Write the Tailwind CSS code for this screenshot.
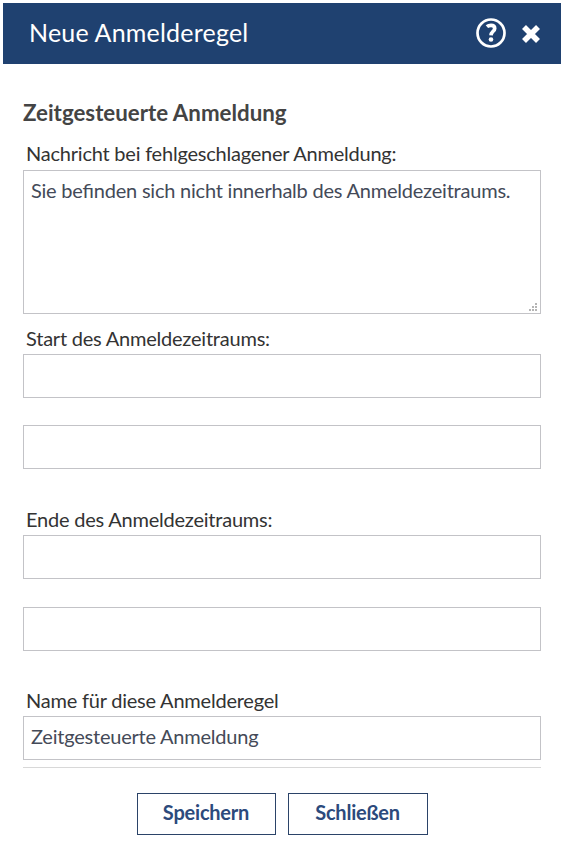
<!DOCTYPE html>
<html lang="de">
<head>
  <meta charset="UTF-8" />
  <meta name="viewport" content="width=device-width, initial-scale=1.0"/>
  <title>Neue Anmelderegel</title>
  <script src="https://cdn.jsdelivr.net/npm/@tailwindcss/browser@4"></script>
</head>
<body class="bg-white font-[Lato,sans-serif] text-[20px] leading-6 tracking-[-0.22px] [font-feature-settings:'liga'_1] text-[#333] overflow-hidden">

  <div class="w-[558px] ml-[3px] pt-[3px]">

    <header class="flex items-center h-[61px] pl-[26px] pr-[21px] pb-px bg-[#1f4170] text-white">
      <h1 class="text-[25px] leading-8 tracking-[0.2px] pb-[2px]">Neue Anmelderegel</h1>
      <button type="button" class="ml-auto" aria-label="Hilfe">
        <svg class="block w-[30px] h-[30px]" viewBox="0 0 30 30" fill="none" stroke="currentColor">
          <circle cx="15" cy="15" r="13.5" stroke-width="2.7" />
          <path d="M10.9 8.7C12.1 7.7 13.5 7.4 15 7.4C17.5 7.4 18.7 8.5 18.7 10.4C18.7 13.3 15.1 13.3 15 17.4" stroke-width="3.7" />
          <circle cx="15" cy="21.5" r="2.3" fill="currentColor" stroke="none" />
        </svg>
      </button>
      <button type="button" class="ml-[16px]" aria-label="Dialog schließen">
        <svg class="block w-[18px] h-[30px]" viewBox="0 0 18 30" stroke="currentColor" stroke-width="5.6">
          <path d="M2 9L16 23M16 9L2 23" />
        </svg>
      </button>
    </header>

    <form class="px-5 pt-[37px]">
      <h2 class="text-[22.3px] leading-6 tracking-normal font-bold text-[#444]">Zeitgesteuerte Anmeldung</h2>

      <label for="message" class="block mt-4 pl-[3px]">Nachricht bei fehlgeschlagener Anmeldung:</label>
      <div class="relative mt-[5px] h-[144px]">
        <textarea id="message" class="block w-full h-full resize-none border border-[#c3c3c7] px-[7px] pt-[7px] text-[#444a58]">Sie befinden sich nicht innerhalb des Anmeldezeitraums.</textarea>
        <!-- resize grip -->
        <svg class="absolute right-1 bottom-[3px] w-2 h-2" viewBox="0 0 8 8" fill="#b5b5b5">
          <path d="M6 0h2v2h-2zM3 3h2v2h-2zM6 3h2v2h-2zM0 6h2v2h-2zM3 6h2v2h-2zM6 6h2v2h-2z" />
        </svg>
      </div>

      <label for="start-date" class="block mt-3 pl-[3px]">Start des Anmeldezeitraums:</label>
      <input id="start-date" type="text" class="block w-full h-11 mt-1 border border-[#c3c3c7] px-[7px]" />
      <input type="text" aria-label="Startzeit" class="block w-full h-11 mt-[27px] border border-[#c3c3c7] px-[7px]" />

      <label for="end-date" class="block mt-[38px] pl-[3px]">Ende des Anmeldezeitraums:</label>
      <input id="end-date" type="text" class="block w-full h-11 mt-1 border border-[#c3c3c7] px-[7px]" />
      <input type="text" aria-label="Endzeit" class="block w-full h-11 mt-7 border border-[#c3c3c7] px-[7px]" />

      <label for="rule-name" class="block mt-[37px] pl-[3px]">Name für diese Anmelderegel</label>
      <input id="rule-name" type="text" value="Zeitgesteuerte Anmeldung" class="block w-full h-11 mt-1 border border-[#c3c3c7] px-[7px] pb-1 text-[#444a58]" />

      <div class="flex justify-center gap-3 mt-[7px] pt-[25px] border-t border-[#d8d8d8] font-bold text-[#2c4a7c]">
        <button type="submit" class="w-[139px] h-[42px] border border-[#2b4368] pb-1">Speichern</button>
        <button type="button" class="w-[140px] h-[42px] border border-[#2b4368] pb-1">Schließen</button>
      </div>
    </form>

  </div>

</body>
</html>
